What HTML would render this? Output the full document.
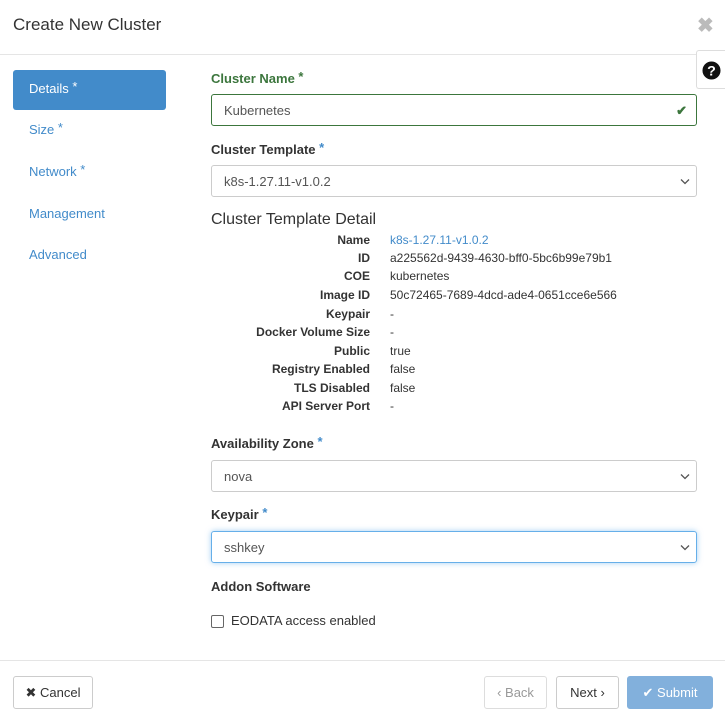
<!DOCTYPE html>
<html><head><style>
*{box-sizing:border-box;margin:0;padding:0}
body{width:725px;height:723px;background:#fff;font-family:"Liberation Sans",sans-serif;font-size:13px;color:#333;position:relative;overflow:hidden}
.a{position:absolute}
.lbl{font-weight:bold;font-size:13px;color:#333}
.star{color:#428bca;font-size:13px;vertical-align:top;position:relative;top:-2px}
.inp{position:absolute;left:211px;width:486px;height:32px;border:1px solid #ccc;border-radius:3px;padding:0 12px;line-height:31px;color:#555;font-size:13px}
.chev{position:absolute;right:6px;top:12px}
.nav{position:absolute;left:29px;color:#428bca;font-size:13px}
.dt{position:absolute;width:160px;left:210px;text-align:right;font-weight:bold;font-size:12px}
.dd{position:absolute;left:390px;font-size:12px}
.btn{position:absolute;top:676px;height:33px;border:1px solid #ccc;border-radius:3px;line-height:31px;text-align:center;font-size:13px;color:#333;background:#fff}
</style></head><body>
<div class="a" style="left:13px;top:15px;font-size:17px;color:#333">Create New Cluster</div>
<div class="a" style="left:697px;top:13px;font-size:20px;color:#bbb;font-weight:bold">✖</div>
<div class="a" style="left:0;top:54px;width:725px;height:1px;background:#e5e5e5"></div>
<div class="a" style="left:696px;top:50px;width:30px;height:39px;border:1px solid #ddd;border-right:none;border-radius:3px 0 0 3px;background:#fff">
<svg class="a" style="left:5px;top:10px" width="19" height="19" viewBox="0 0 20 20"><circle cx="10" cy="10" r="9.5" fill="#111"/><text x="10" y="15.5" text-anchor="middle" font-family="Liberation Sans" font-weight="bold" font-size="15" fill="#fff">?</text></svg></div>

<div class="a" style="left:13px;top:70px;width:153px;height:40px;background:#428bca;border-radius:3px;color:#fff;padding:11px 16px">Details <span style="font-size:13px;vertical-align:top;position:relative;top:-2px">*</span></div>
<div class="nav" style="top:122px">Size <span class="star">*</span></div>
<div class="nav" style="top:164px">Network <span class="star">*</span></div>
<div class="nav" style="top:206px">Management</div>
<div class="nav" style="top:247px">Advanced</div>

<div class="a lbl" style="left:211px;top:71px;color:#3c763d">Cluster Name <span style="font-size:13px;vertical-align:top;position:relative;top:-2px">*</span></div>
<div class="inp" style="top:94px;border-color:#3c763d">Kubernetes<span class="a" style="right:9px;top:0;color:#3c763d;font-weight:bold">✔</span></div>
<div class="a lbl" style="left:211px;top:142px">Cluster Template <span class="star">*</span></div>
<div class="inp" style="top:165px">k8s-1.27.11-v1.0.2<svg class="chev" width="10" height="7" viewBox="0 0 10 7"><path d="M1 1.5L5 5.5L9 1.5" fill="none" stroke="#555" stroke-width="1.3"/></svg></div>
<div class="a" style="left:211px;top:211px;font-size:16px">Cluster Template Detail</div>
<div class="dt" style="top:233px">Name</div><div class="dd" style="top:233px;color:#428bca">k8s-1.27.11-v1.0.2</div>
<div class="dt" style="top:251px">ID</div><div class="dd" style="top:251px">a225562d-9439-4630-bff0-5bc6b99e79b1</div>
<div class="dt" style="top:269px">COE</div><div class="dd" style="top:269px">kubernetes</div>
<div class="dt" style="top:288px">Image ID</div><div class="dd" style="top:288px">50c72465-7689-4dcd-ade4-0651cce6e566</div>
<div class="dt" style="top:307px">Keypair</div><div class="dd" style="top:307px">-</div>
<div class="dt" style="top:325px">Docker Volume Size</div><div class="dd" style="top:325px">-</div>
<div class="dt" style="top:344px">Public</div><div class="dd" style="top:344px">true</div>
<div class="dt" style="top:362px">Registry Enabled</div><div class="dd" style="top:362px">false</div>
<div class="dt" style="top:381px">TLS Disabled</div><div class="dd" style="top:381px">false</div>
<div class="dt" style="top:399px">API Server Port</div><div class="dd" style="top:399px">-</div>

<div class="a lbl" style="left:211px;top:436px">Availability Zone <span class="star">*</span></div>
<div class="inp" style="top:460px">nova<svg class="chev" width="10" height="7" viewBox="0 0 10 7"><path d="M1 1.5L5 5.5L9 1.5" fill="none" stroke="#555" stroke-width="1.3"/></svg></div>
<div class="a lbl" style="left:211px;top:507px">Keypair <span class="star">*</span></div>
<div class="inp" style="top:531px;border-color:#66afe9;box-shadow:0 0 6px rgba(102,175,233,.6)">sshkey<svg class="chev" width="10" height="7" viewBox="0 0 10 7"><path d="M1 1.5L5 5.5L9 1.5" fill="none" stroke="#555" stroke-width="1.3"/></svg></div>
<div class="a lbl" style="left:211px;top:579px">Addon Software</div>
<div class="a" style="left:211px;top:615px;width:13px;height:13px;border:1px solid #666;border-radius:2px"></div>
<div class="a" style="left:231px;top:613px">EODATA access enabled</div>

<div class="a" style="left:0;top:660px;width:725px;height:1px;background:#e5e5e5"></div>
<div class="btn" style="left:13px;width:80px">✖ Cancel</div>
<div class="btn" style="left:484px;width:63px;color:#999;border-color:#ddd">‹ Back</div>
<div class="btn" style="left:556px;width:63px">Next ›</div>
<div class="btn" style="left:627px;width:86px;background:#82b0dc;border-color:#82b0dc;color:#fff">✔ Submit</div>
</body></html>
